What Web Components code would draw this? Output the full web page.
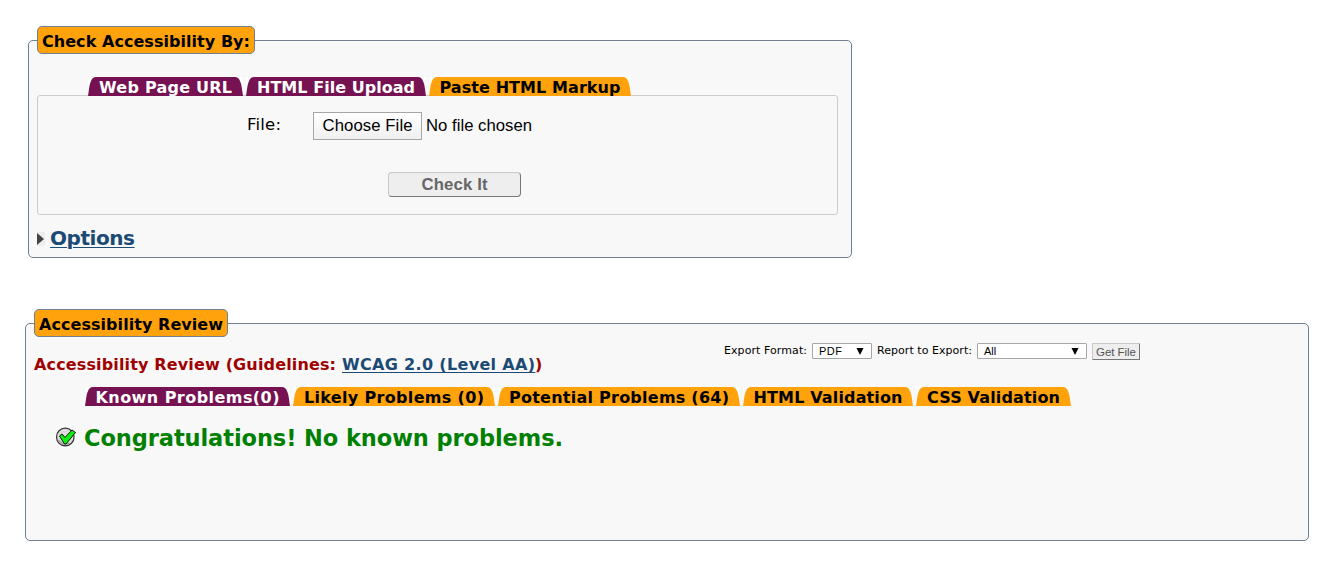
<!DOCTYPE html>
<html lang="en">
<head>
<meta charset="utf-8">
<title>Web Accessibility Checker</title>
<style>
body{margin:0;background:#fff;font-family:"DejaVu Sans",sans-serif;color:#000}
</style>
</head>
<body>
<checker-page></checker-page>
<script>
const define=(name,html,init)=>customElements.define(name,class extends HTMLElement{
  connectedCallback(){
    if(this.shadowRoot)return;
    const t=document.createElement('template');
    t.innerHTML=html;
    this.attachShadow({mode:'open'}).append(t.content.cloneNode(true));
    if(init)init(this,this.shadowRoot);
  }
});

/* A single line of text tracked to fill the width given in its w attribute. */
define('fit-text',`<style>
:host{display:inline-block;white-space:nowrap}
span{display:inline-block;text-decoration:inherit}
</style><span><slot></slot></span>`,(el,root)=>{
  const s=root.querySelector('span'),w=+el.getAttribute('w');
  el.style.width=w+'px';
  const n=el.textContent.length-1;
  if(n)s.style.letterSpacing=((w-s.getBoundingClientRect().width)/n)+'px';
});

define('titled-box',`<style>
:host{display:block}
fieldset{box-sizing:border-box;height:232px;min-width:0;margin:0;padding:0 13px 0 8px;border:1px solid #708090;border-radius:5px;background:#f8f8f8}
legend{box-sizing:border-box;height:28px;padding:0 4px;border:1px solid #708090;border-radius:5px;background:#ffa20c;font-weight:bold;font-size:16px;line-height:30px}
</style><fieldset><legend><slot name="title"></slot></legend><slot></slot></fieldset>`);

define('tab-item',`<style>
:host{display:flex;height:19px;color:#000;--fill:#ffa20c;font:bold 16px/22px "DejaVu Sans",sans-serif;background:linear-gradient(#fff,#f8f8f8)}
:host([purple]){--fill:#761251;color:#fff}
svg{flex:none;width:8px;height:19px;fill:var(--fill)}
.b{flex:1;background:var(--fill);display:flex;justify-content:center;white-space:nowrap;overflow:hidden}
</style>
<svg viewBox="0 0 8 19"><path d="M0 19C1 14 1 8 3 4Q4.500 0 8 0V19Z"/></svg>
<div class="b"><slot></slot></div>
<svg viewBox="0 0 8 19"><path d="M8 19C7 14 7 8 5 4Q3.500 0 0 0V19Z"/></svg>`,(el)=>{
  el.style.width=el.getAttribute('w')+'px';
});

define('tab-bar',`<style>
:host{display:flex;position:relative;height:19px;gap:3px}
</style><slot></slot>`);

define('form-panel',`<style>
:host{display:flex;flex-direction:column;box-sizing:border-box;height:120px;margin-top:-1px;border:1px solid #ccc;border-radius:3px}
.row{display:flex;align-items:center;height:28px;margin:16px 0 0 209px}
.label{width:66px;font-size:16.500px;line-height:20px;padding-bottom:2px}
.choose{box-sizing:border-box;width:109px;height:28px;border:1px solid #a6a6a6;background:linear-gradient(#fff,#f0f0f0);text-align:center;font:16.700px/26px "Liberation Sans",sans-serif}
.none{margin-left:4px;font:16.700px/26px "Liberation Sans",sans-serif}
button{box-sizing:border-box;width:133px;height:25px;margin:32px 0 0 350px;padding:0;border:1px solid #c8c8c8;border-right-color:#767676;border-bottom-color:#767676;border-radius:4px;background:#eee;color:#666;font:bold 16.700px/23px "Liberation Sans",sans-serif}
</style>
<div class="row"><span class="label"><fit-text w="34">File:</fit-text></span><span class="choose"><fit-text w="90">Choose File</fit-text></span><span class="none"><fit-text w="106">No file chosen</fit-text></span></div>
<button><fit-text w="66">Check It</fit-text></button>`);

define('options-toggle',`<style>
:host{display:flex;align-items:center;height:26px;margin-top:10px}
svg{width:8px;height:14px;margin:2px 5px 0 0}
a{color:#1b4a75;font-weight:bold;font-size:20px;line-height:26px;text-decoration:underline;text-decoration-thickness:1px;text-underline-offset:2px}
fit-text{text-decoration:inherit}
</style>
<svg viewBox="0 0 8 14"><path d="M0 0H8V14H0Z" fill="#eee"/><path d="M0 1L7 7L0 13Z" fill="#444"/></svg><a><fit-text w="85">Options</fit-text></a>`);

define('drop-down',`<style>
:host{display:flex;box-sizing:border-box;align-items:center;justify-content:space-between;height:16px;padding:0 7px 0 6px;border:1px solid #a6a6a6;border-radius:1px;background:#fff;font:11px/15px "Liberation Sans",sans-serif}
svg{width:8px;height:7px}
</style><slot></slot><svg viewBox="0 0 8 7"><path d="M.5 0H7.500L4 7Z"/></svg>`);

define('export-bar',`<style>
:host{display:flex;height:17px;margin:6px 0 0 690px;font-size:11px;line-height:15px}
drop-down:first-of-type{width:60px;margin:0 5px 0 5px}
drop-down:last-of-type{width:110px;margin:0 5px}
button{box-sizing:border-box;width:48px;height:17px;padding:0;border:1px solid #c8c8c8;border-right-color:#767676;border-bottom-color:#767676;border-radius:1px;background:#eee;color:#555;font:11.500px/14px "Liberation Sans",sans-serif}
</style>
<fit-text w="83">Export Format:</fit-text><drop-down><fit-text w="23">PDF</fit-text></drop-down><fit-text w="95">Report to Export:</fit-text><drop-down>All</drop-down><button><fit-text w="40">Get File</fit-text></button>`);

define('review-heading',`<style>
:host{display:block;height:22px;margin-top:-6px;color:#a00000;font-weight:bold;font-size:16px;line-height:22px;white-space:nowrap}
a{margin-left:6px;color:#1b4a75;text-decoration:underline;text-decoration-thickness:1px;text-underline-offset:2px}
fit-text{text-decoration:inherit}
div{display:flex}
</style><div><fit-text w="302">Accessibility Review (Guidelines:</fit-text><a><fit-text w="193">WCAG 2.0 (Level AA)</fit-text></a><fit-text w="7">)</fit-text></div>`);

define('success-message',`<style>
:host{display:flex;align-items:center;height:30px;margin:17px 0 0 21px;color:#008000;font-weight:bold;font-size:22.500px;line-height:30px}
svg{width:22px;height:20px;margin:0 7px 2px 0}
</style>
<svg viewBox="0 0 22 20"><circle cx="10.300" cy="10" r="8.800" fill="#ddd" stroke="#333" stroke-width="1.200"/><path d="M3.500 13Q7 19 14 16" fill="none" stroke="#aaa" stroke-width="2"/><path d="M4.500 9L7 7L10 10.500L17 3L20.500 5.500L11 17H9.500Z" fill="#0df20d" stroke="#111" stroke-width="1"/></svg><fit-text w="479">Congratulations! No known problems.</fit-text>`);

define('checker-page',`<style>
:host{display:flex;flex-direction:column;box-sizing:border-box;height:587px;padding:26px 0 0 25px}
.check{width:824px;margin-left:3px}
.review{width:1284px;margin-top:51px}
.check tab-bar{margin:23px 0 0 51px}
.review tab-bar{margin:11px 0 0 51px}
</style>
<titled-box class="check"><fit-text slot="title" w="208">Check Accessibility By:</fit-text>
<tab-bar><tab-item purple w="155"><fit-text w="133">Web Page URL</fit-text></tab-item><tab-item purple w="180"><fit-text w="158">HTML File Upload</fit-text></tab-item><tab-item w="202"><fit-text w="181">Paste HTML Markup</fit-text></tab-item></tab-bar>
<form-panel></form-panel>
<options-toggle></options-toggle>
</titled-box>
<titled-box class="review"><fit-text slot="title" w="184">Accessibility Review</fit-text>
<export-bar></export-bar>
<review-heading></review-heading>
<tab-bar><tab-item purple w="205"><fit-text w="184">Known Problems(0)</fit-text></tab-item><tab-item w="202"><fit-text w="180">Likely Problems (0)</fit-text></tab-item><tab-item w="242"><fit-text w="220">Potential Problems (64)</fit-text></tab-item><tab-item w="170"><fit-text w="149">HTML Validation</fit-text></tab-item><tab-item w="155"><fit-text w="133">CSS Validation</fit-text></tab-item></tab-bar>
<success-message></success-message>
</titled-box>`);
</script>
</body>
</html>
